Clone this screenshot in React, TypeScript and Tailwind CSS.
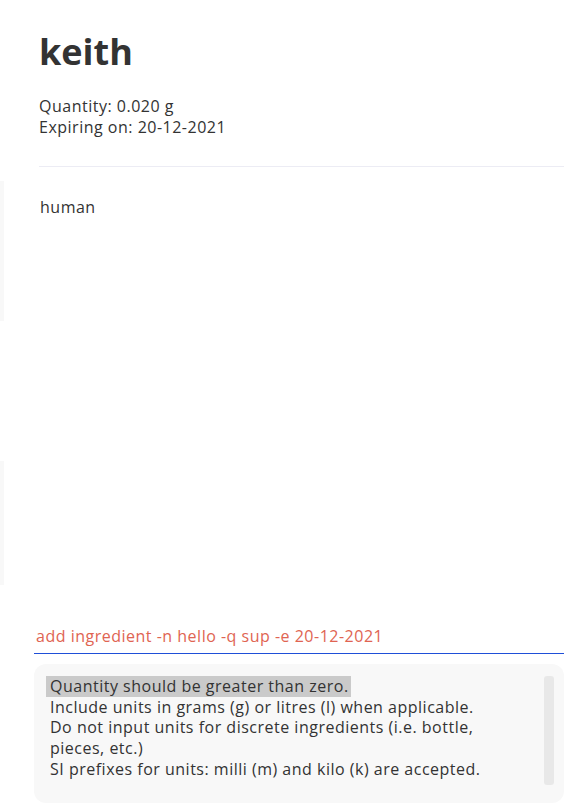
import * as React from "react"

const hints = [
  "Include units in grams (g) or litres (l) when applicable.",
  "Do not input units for discrete ingredients (i.e. bottle, pieces, etc.)",
  "SI prefixes for units: milli (m) and kilo (k) are accepted.",
]

export default function App() {
  return (
    <div className="w-[584px] h-[810px] bg-white flex flex-col font-['Open_Sans',sans-serif] text-[#333333] overflow-hidden">
      {/* Ingredient header */}
      <div className="pl-[39px] pr-[20px] pt-[30px]">
        <h1 className="text-[36px] leading-[43px] font-bold text-[#333333]">keith</h1>
        <div className="mt-[23px] text-[16px] leading-[21px] tracking-[0.5px] text-[#333333]">
          <p>Quantity: 0.020 g</p>
          <p>Expiring on: 20-12-2021</p>
        </div>
        <div className="mt-[28px] h-px bg-[#ececf4]" />
      </div>

      {/* Tags area */}
      <div className="flex h-[459px]">
        <div className="w-[4px] flex flex-col pt-[14px]">
          <div className="h-[140px] bg-[#f8f8f8]" />
          <div className="h-[140px]" />
          <div className="h-[124px] bg-[#f8f8f8]" />
        </div>
        <div className="pl-[36px] pt-[30px] text-[16px] leading-[21px] tracking-[0.5px] text-[#333333]">human</div>
      </div>

      {/* Command box */}
      <div className="pl-[34px] pr-[20px]">
        <div className="border-b border-[#1f4fd8] pl-[2px] pb-[6px] text-[16px] leading-[21px] tracking-[0.5px] text-[#e06452]">
          add ingredient -n hello -q sup -e 20-12-2021
        </div>
        <div className="mt-[10px] h-[139px] rounded-[12px] bg-[#f8f8f8] flex pl-[16px] pr-[10px]">
          <div className="flex-1 pt-[12px] text-[16px] leading-[20.7px] tracking-[0.5px] text-[#333333] pr-[40px]">
            <p className="w-fit bg-[#cacaca] -ml-[4px] pl-[4px] pr-[2px]">Quantity should be greater than zero.</p>
            {hints.map((h) => (
              <p key={h}>{h}</p>
            ))}
          </div>
          <div className="mt-[12px] w-[10px] h-[109px] rounded-[3px] bg-[#e8e8e8]" />
        </div>
      </div>
    </div>
  )
}
